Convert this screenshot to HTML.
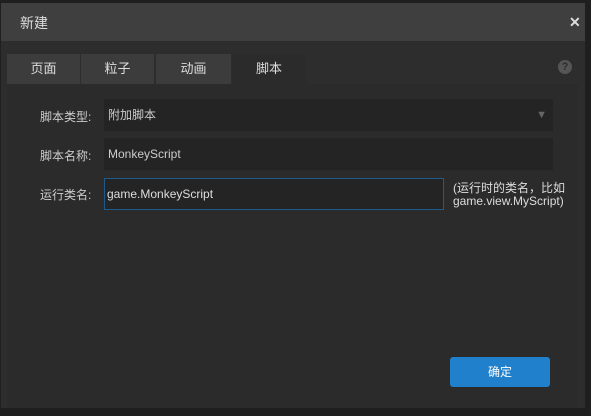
<html><head><style>
body{margin:0;width:591px;height:416px;background:#1f1f1f;font-family:"Liberation Sans","Noto Sans CJK SC",sans-serif;font-size:12px;color:#ddd;position:relative;overflow:hidden}
.d{position:absolute;left:1px;top:3px;width:584px;height:405px;background:#2d2d2d}
.t{position:absolute;left:1px;top:3px;width:584px;height:38px;background:#3f3f3f}
.t span{position:absolute;left:19px;top:10px;font-size:14px;color:#ddd}
.x{position:absolute;left:568px;top:11px;font-size:14px;font-weight:bold;color:#ddd}
.tabs{position:absolute;left:7px;top:54px;height:30px}
.tab{position:absolute;top:0;height:30px;width:73px;background:#3c3c3c;text-align:center;line-height:30px;color:#ddd;font-size:13px}
.c{position:absolute;left:7px;top:84px;width:571px;height:324px;background:#2b2b2b}
.lb{position:absolute;left:40px;color:#ccc;font-size:12px}
.f{position:absolute;left:104px;width:449px;height:32px;background:#242424;color:#ccc;line-height:32px;box-sizing:border-box;padding-left:4px;font-size:12px}
.btn{position:absolute;left:450px;top:357px;width:100px;height:30px;background:#2080cc;border-radius:3px;color:#fff;text-align:center;line-height:30px;font-size:12px}
</style></head><body>
<div class="d"></div>
<div class="t"><span>新建</span><div class="x">✕</div></div>
<div class="c"></div>
<div class="tabs">
<div class="tab" style="left:0">页面</div>
<div class="tab" style="left:74px">粒子</div>
<div class="tab" style="left:149px;width:75px">动画</div>
<div class="tab" style="left:225px;width:74px;background:#2b2b2b">脚本</div>
</div>
<div style="position:absolute;left:558px;top:60px;width:14px;height:14px;border-radius:50%;background:#555;color:#2d2d2d;font-size:11px;font-weight:bold;text-align:center;line-height:14px">?</div>
<div class="lb" style="top:108px">脚本类型:</div>
<div class="f" style="top:99px">附加脚本<span style="position:absolute;right:6px;top:0;color:#666;font-size:11px">▼</span></div>
<div class="lb" style="top:147px">脚本名称:</div>
<div class="f" style="top:138px">MonkeyScript</div>
<div class="lb" style="top:186px">运行类名:</div>
<div class="f" style="top:178px;width:340px;height:32px;border:1px solid #1e5a8a;padding-left:2px;line-height:30px;color:#ddd">game.MonkeyScript</div>
<div style="position:absolute;left:453px;top:182px;font-size:12px;line-height:13px;color:#ddd">(运行时的类名，比如<br>game.view.MyScript)</div>
<div class="btn">确定</div>
</body></html>
